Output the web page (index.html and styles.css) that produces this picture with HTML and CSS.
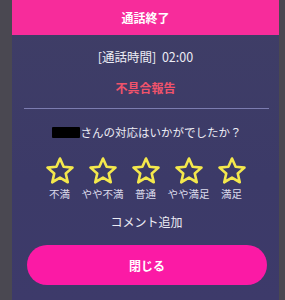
FILE: index.html
```html
<!DOCTYPE html>
<html lang="ja">
<head>
<meta charset="utf-8">
<link rel="stylesheet" href="styles.css">
</head>
<body>
<div class="screen">
  <div class="panel">
    <div class="header">通話終了</div>
    <div class="time">[通話時間]&nbsp;&nbsp;02:00</div>
    <div class="report">不具合報告</div>
    <div class="divider"></div>
    <div class="question"><span class="redact"></span>さんの対応はいかがでしたか？</div>
    <div class="stars">
      <div class="rate">
        <svg class="star" viewBox="0 0 24 24"><polygon points="12,2 14.9,8.6 22,9.3 16.6,14 18.2,21 12,17.3 5.8,21 7.4,14 2,9.3 9.1,8.6"/></svg>
        <span class="label">不満</span>
      </div>
      <div class="rate">
        <svg class="star" viewBox="0 0 24 24"><polygon points="12,2 14.9,8.6 22,9.3 16.6,14 18.2,21 12,17.3 5.8,21 7.4,14 2,9.3 9.1,8.6"/></svg>
        <span class="label">やや不満</span>
      </div>
      <div class="rate">
        <svg class="star" viewBox="0 0 24 24"><polygon points="12,2 14.9,8.6 22,9.3 16.6,14 18.2,21 12,17.3 5.8,21 7.4,14 2,9.3 9.1,8.6"/></svg>
        <span class="label">普通</span>
      </div>
      <div class="rate">
        <svg class="star" viewBox="0 0 24 24"><polygon points="12,2 14.9,8.6 22,9.3 16.6,14 18.2,21 12,17.3 5.8,21 7.4,14 2,9.3 9.1,8.6"/></svg>
        <span class="label">やや満足</span>
      </div>
      <div class="rate">
        <svg class="star" viewBox="0 0 24 24"><polygon points="12,2 14.9,8.6 22,9.3 16.6,14 18.2,21 12,17.3 5.8,21 7.4,14 2,9.3 9.1,8.6"/></svg>
        <span class="label">満足</span>
      </div>
    </div>
    <div class="comment">コメント追加</div>
    <div class="close">閉じる</div>
  </div>
</div>
</body>
</html>
```

FILE: styles.css
```css
html, body {
  margin: 0;
  padding: 0;
}
body {
  width: 285px;
  height: 300px;
  overflow: hidden;
  background: #4a4851;
  font-family: "Noto Sans CJK JP", "Noto Sans", sans-serif;
  color: #ececf4;
}
.screen {
  display: flex;
  height: 300px;
  padding-left: 12px;
}
.panel {
  width: 267px;
  height: 300px;
  background: linear-gradient(180deg, #3f3e66 0%, #3c3a68 60%, #3d3a6a 100%);
  display: flex;
  flex-direction: column;
  align-items: center;
}
.header {
  align-self: stretch;
  height: 35px;
  background: #f72c9b;
  color: #fff;
  font-weight: bold;
  font-size: 12px;
  display: flex;
  align-items: center;
  justify-content: center;
}
.time {
  margin-top: 14px;
  font-size: 12.5px;
  line-height: 16px;
}
.report {
  margin-top: 15px;
  font-size: 12px;
  line-height: 16px;
  font-weight: bold;
  color: #f0536b;
}
.divider {
  margin-top: 12px;
  width: 245px;
  height: 1px;
  background: #7c7cb0;
  margin-left: 1px;
}
.question {
  margin-top: 15px;
  font-size: 11.5px;
  line-height: 16px;
  display: flex;
  align-items: center;
  margin-left: 2px;
}
.redact {
  display: inline-block;
  width: 28px;
  height: 11px;
  background: #000;
  border-radius: 1px;
  margin-right: 1px;
}
.stars {
  margin-top: 18px;
  display: flex;
}
.rate {
  width: 43px;
  display: flex;
  flex-direction: column;
  align-items: center;
}
.star {
  width: 30px;
  height: 30px;
  margin: -2px 0 -2px;
}
.star polygon {
  fill: none;
  stroke: #f4e84c;
  stroke-width: 2.1;
  stroke-linejoin: round;
}
.label {
  margin-top: 3px;
  font-size: 10.5px;
  line-height: 14px;
  white-space: nowrap;
  color: #dcdcec;
}
.comment {
  margin-top: 13px;
  font-size: 12px;
  line-height: 16px;
  margin-left: 2px;
}
.close {
  margin-top: 15px;
  align-self: flex-start;
  margin-left: 15px;
  width: 240px;
  height: 40px;
  border-radius: 20px;
  background: #fb1aa5;
  color: #fff;
  font-weight: bold;
  font-size: 12px;
  display: flex;
  align-items: center;
  justify-content: center;
}
```
